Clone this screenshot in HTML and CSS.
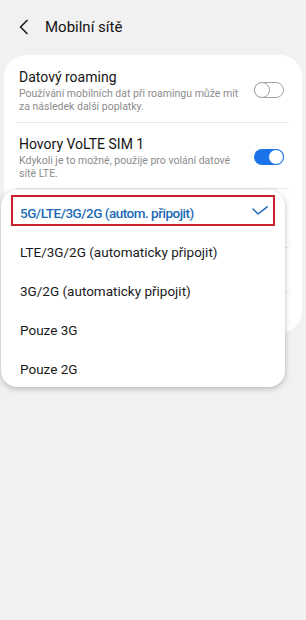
FILE: index.html
```html
<!DOCTYPE html>
<html lang="cs">
<head>
<meta charset="utf-8">
<title>Mobilní sítě</title>
<link rel="stylesheet" href="styles.css">
</head>
<body>
<div class="screen">
  <header class="topbar">
    <svg class="back" width="12" height="16" viewBox="0 0 12 16"><polyline points="9,1.5 2.5,8 9,14.5" fill="none" stroke="#222" stroke-width="1.7" stroke-linecap="round" stroke-linejoin="round"/></svg>
    <h1 class="title">Mobilní sítě</h1>
  </header>

  <section class="card">
    <div class="row row-first">
      <div class="row-text">
        <div class="row-title">Datový roaming</div>
        <div class="row-sub">Používání mobilních dat při roamingu může mít za následek další poplatky.</div>
      </div>
      <span class="switch switch-off"><span class="thumb"></span></span>
    </div>
    <div class="divider"></div>
    <div class="row row-second">
      <div class="row-text">
        <div class="row-title">Hovory VoLTE SIM 1</div>
        <div class="row-sub">Kdykoli je to možné, použije pro volání datové sítě LTE.</div>
      </div>
      <span class="switch switch-on"><span class="thumb"></span></span>
    </div>
    <div class="divider"></div>
    <div class="row row-tall"></div>
    <div class="divider"></div>
    <div class="row row-mid"></div>
    <div class="divider"></div>
    <div class="row row-last"></div>
  </section>

  <div class="menu">
    <div class="menu-item selected">
      <span>5G/LTE/3G/2G (autom. připojit)</span>
      <svg class="check" width="16" height="10" viewBox="0 0 16 10"><polyline points="1,3 6,8 15.2,0.8" fill="none" stroke="#1c6bb5" stroke-width="1.5" stroke-linecap="round" stroke-linejoin="round"/></svg>
      <span class="highlight"></span>
    </div>
    <div class="menu-item">LTE/3G/2G (automaticky připojit)</div>
    <div class="menu-item">3G/2G (automaticky připojit)</div>
    <div class="menu-item">Pouze 3G</div>
    <div class="menu-item">Pouze 2G</div>
  </div>
</div>
</body>
</html>
```

FILE: styles.css
```css
* { box-sizing: border-box; }

html, body {
  margin: 0;
  padding: 0;
}

body {
  background: #f1f1f1;
  font-family: Roboto, "Noto Sans", "Liberation Sans", sans-serif;
  color: #1a1a1a;
}

.screen {
  position: relative;
  width: 306px;
  height: 620px;
  overflow: hidden;
}

.topbar {
  height: 55px;
  display: flex;
  align-items: center;
  padding-left: 18px;
  padding-bottom: 1px;
}

.back {
  display: block;
  margin-right: 15px;
}

.title {
  margin: 0;
  font-size: 15px;
  font-weight: 400;
  color: #141414;
}

.card {
  margin: 0 4px;
  background: #ffffff;
  border-radius: 22px;
  padding-top: 12px;
}

.row {
  display: flex;
  align-items: center;
  gap: 8px;
  padding: 0 18px 0 15px;
}

.row-first { padding-bottom: 9px; }
.row-second { padding-top: 11px; padding-bottom: 8px; }
.row-tall { height: 58px; }
.row-mid { height: 44px; }
.row-last { height: 40px; }

.row-text {
  flex: 1;
  min-width: 0;
}

.row-title {
  font-size: 14px;
  line-height: 20px;
  color: #141414;
}

.row-sub {
  font-size: 10.5px;
  line-height: 13px;
  color: #8c8c8c;
}

.divider {
  height: 1px;
  background: #e8e8e8;
  margin: 0 13px 0 12px;
}

.switch {
  position: relative;
  flex: none;
  width: 30px;
  height: 16px;
  border-radius: 8px;
}

.switch .thumb {
  position: absolute;
  top: 0;
  width: 16px;
  height: 16px;
  border-radius: 50%;
  background: #fff;
}

.switch-off {
  border: 1.3px solid #a3a3a3;
}

.switch-off .thumb {
  top: -1.3px;
  left: -1.3px;
  border: 1.3px solid #a3a3a3;
}

.switch-on {
  background: #1a73e8;
}

.switch-on .thumb {
  right: 0;
  border: 1.5px solid #1a73e8;
}

.menu {
  position: absolute;
  top: 190px;
  left: 1px;
  width: 284px;
  height: 197px;
  background: #ffffff;
  border-radius: 16px;
  box-shadow: 0 2px 6px rgba(0, 0, 0, 0.22), 0 0 2px rgba(0, 0, 0, 0.08);
  padding-top: 3px;
}

.menu-item {
  position: relative;
  display: flex;
  align-items: center;
  justify-content: space-between;
  height: 39px;
  padding: 0 17px 0 19px;
  font-size: 13.5px;
  color: #1a1a1a;
}

.menu-item.selected {
  color: #1c6bb5;
  font-size: 13.5px;
  font-weight: 500;
  letter-spacing: -0.5px;
}

.check { display: block; margin-top: -3px; }

.highlight {
  position: absolute;
  left: 10px;
  top: 2px;
  width: 264px;
  height: 31px;
  border: 2px solid #c9212d;
}
```
